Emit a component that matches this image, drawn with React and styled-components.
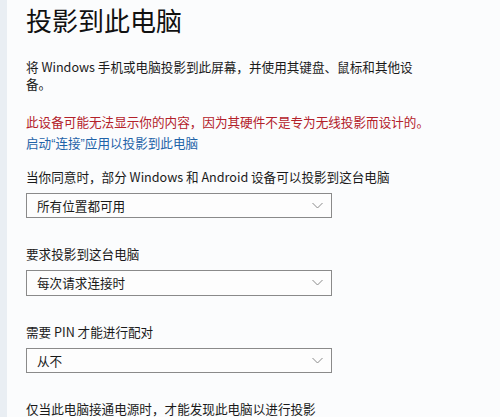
import React from "react";
import styled, { createGlobalStyle } from "styled-components";

const Global = createGlobalStyle`
  html, body { margin: 0; padding: 0; background: #fbfcfd; }
  body { font-family: "Noto Sans CJK SC", "Noto Sans", sans-serif; color: #1a1a1a; overflow: hidden; }
`;

const Page = styled.div`
  display: flex;
  width: 500px;
  height: 417px;
  overflow: hidden;
`;

const SideStrip = styled.div`
  width: 7px;
  flex: none;
  background: #e9eef3;
`;

const Content = styled.div`
  flex: 1;
  padding: 2px 0 0 19px;
  display: flex;
  flex-direction: column;
`;

const Title = styled.h1`
  margin: 0;
  font-size: 26px;
  font-weight: 400;
  line-height: 36px;
  color: #111;
`;

const Para = styled.p`
  margin: ${(p) => p.$mt || 0}px 0 0;
  font-size: 12.6px;
  line-height: 17px;
  width: ${(p) => p.$w || 400}px;
  color: ${(p) => p.$color || "#1a1a1a"};
`;

const Quote = styled.span`
  font-family: "Liberation Sans", sans-serif;
`;

const Select = styled.div`
  box-sizing: border-box;
  margin-top: 8px;
  width: 306px;
  height: 27px;
  border: 1.5px solid #8a8a8a;
  display: flex;
  align-items: center;
  justify-content: space-between;
  padding: 0 8px 0 10px;
  font-size: 12.6px;
  color: #1a1a1a;
  background: #fdfdfd;
`;

const Chevron = () => (
  <svg width="11" height="7" viewBox="0 0 11 7">
    <path d="M0.5 1 L5.5 6 L10.5 1" fill="none" stroke="#8a8a8a" strokeWidth="1" />
  </svg>
);

export default function App() {
  return (
    <>
      <Global />
      <Page>
        <SideStrip />
        <Content>
          <Title>投影到此电脑</Title>
          <Para $mt={20} $w={392}>将 Windows 手机或电脑投影到此屏幕，并使用其键盘、鼠标和其他设备。</Para>
          <Para $mt={21} $w={440} $color="#b3212a">此设备可能无法显示你的内容，因为其硬件不是专为无线投影而设计的。</Para>
          <Para $mt={4} $color="#1f63a8">启动<Quote>“</Quote>连接<Quote>”</Quote>应用以投影到此电脑</Para>
          <Para $mt={15} $w={460}>当你同意时，部分 Windows 和 Android 设备可以投影到这台电脑</Para>
          <Select>所有位置都可用<Chevron /></Select>
          <Para $mt={27}>要求投影到这台电脑</Para>
          <Select>每次请求连接时<Chevron /></Select>
          <Para $mt={27}>需要 PIN 才能进行配对</Para>
          <Select>从不<Chevron /></Select>
          <Para $mt={27}>仅当此电脑接通电源时，才能发现此电脑以进行投影</Para>
        </Content>
      </Page>
    </>
  );
}
